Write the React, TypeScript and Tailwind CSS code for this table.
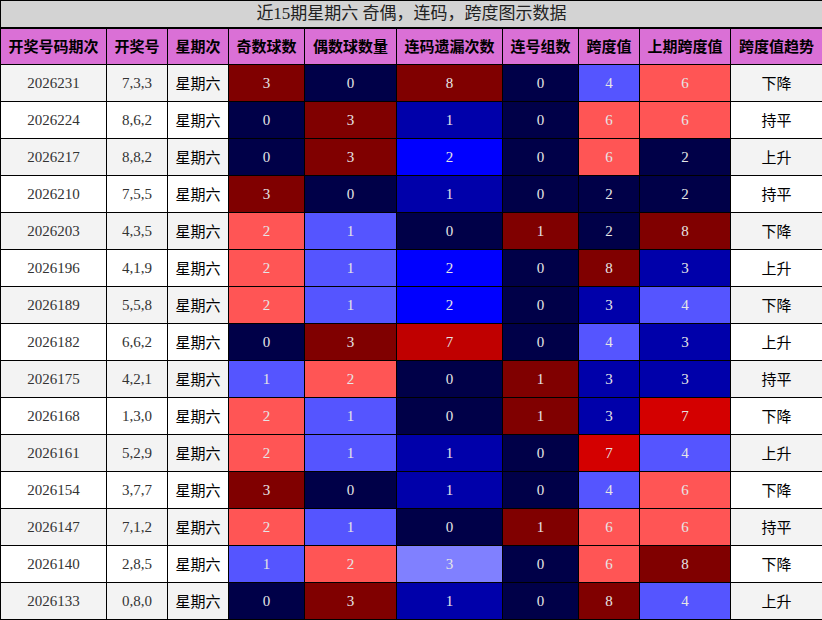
const NAVY = "bg-[#000048]";
const DKRED = "bg-[#800000]";
const LRED = "bg-[#ff5555]";
const LBLUE = "bg-[#5555ff]";
const MBLUE = "bg-[#0000aa]";
const BLUE = "bg-[#0000ff]";
const LAV = "bg-[#8080ff]";
const RED1 = "bg-[#c00000]";
const RED2 = "bg-[#d40000]";

const oddEven: Record<number, string> = { 0: NAVY, 1: LBLUE, 2: LRED, 3: DKRED };
const lianma: Record<number, string> = { 0: NAVY, 1: MBLUE, 2: BLUE, 3: LAV, 7: RED1, 8: DKRED };
const lianhao: Record<number, string> = { 0: NAVY, 1: DKRED };
const span: Record<number, string> = { 2: NAVY, 3: MBLUE, 4: LBLUE, 6: LRED, 7: RED2, 8: DKRED };

type Row = [string, string, number, number, number, number, number, number, string];

const ROWS: Row[] = [
  ["2026231", "7,3,3", 3, 0, 8, 0, 4, 6, "下降"],
  ["2026224", "8,6,2", 0, 3, 1, 0, 6, 6, "持平"],
  ["2026217", "8,8,2", 0, 3, 2, 0, 6, 2, "上升"],
  ["2026210", "7,5,5", 3, 0, 1, 0, 2, 2, "持平"],
  ["2026203", "4,3,5", 2, 1, 0, 1, 2, 8, "下降"],
  ["2026196", "4,1,9", 2, 1, 2, 0, 8, 3, "上升"],
  ["2026189", "5,5,8", 2, 1, 2, 0, 3, 4, "下降"],
  ["2026182", "6,6,2", 0, 3, 7, 0, 4, 3, "上升"],
  ["2026175", "4,2,1", 1, 2, 0, 1, 3, 3, "持平"],
  ["2026168", "1,3,0", 2, 1, 0, 1, 3, 7, "下降"],
  ["2026161", "5,2,9", 2, 1, 1, 0, 7, 4, "上升"],
  ["2026154", "3,7,7", 3, 0, 1, 0, 4, 6, "下降"],
  ["2026147", "7,1,2", 2, 1, 0, 1, 6, 6, "持平"],
  ["2026140", "2,8,5", 1, 2, 3, 0, 6, 8, "下降"],
  ["2026133", "0,8,0", 0, 3, 1, 0, 8, 4, "上升"],
];

const HEADERS = ["开奖号码期次", "开奖号", "星期次", "奇数球数", "偶数球数量", "连码遗漏次数", "连号组数", "跨度值", "上期跨度值", "跨度值趋势"];
const WIDTHS = ["w-[106px]", "w-[61px]", "w-[61px]", "w-[76px]", "w-[92px]", "w-[106px]", "w-[76px]", "w-[61px]", "w-[91px]", "w-[92px]"];

const CJK = "font-['Noto_Sans_CJK_SC',sans-serif]";
const SERIF = "font-['Liberation_Serif','Noto_Sans_CJK_SC',serif]";

function ColorCell({ value, bg }: { value: number; bg: string }) {
  return (
    <td className={`border border-black text-center text-[15px] text-[#e6e6e6] ${SERIF} ${bg}`}>{value}</td>
  );
}

export default function App() {
  return (
    <div className="w-[822px] h-[620px] overflow-hidden bg-white">
      <table className="w-[822px] table-fixed border-collapse">
        <colgroup>
          {WIDTHS.map((w, i) => (
            <col key={i} className={w} />
          ))}
        </colgroup>
        <thead>
          <tr className="h-[27px]">
            <th colSpan={10} className={`border border-black border-b-2 bg-[#d3d3d3] text-center text-[17px] font-normal text-[#222] ${SERIF}`}>
              近15期星期六 奇偶，连码，跨度图示数据
            </th>
          </tr>
          <tr className="h-[37px] bg-[#da70d6]">
            {HEADERS.map((h) => (
              <th key={h} className={`border border-black text-center text-[15px] font-bold text-black whitespace-nowrap ${CJK}`}>
                {h}
              </th>
            ))}
          </tr>
        </thead>
        <tbody>
          {ROWS.map((r, i) => {
            const rowBg = i % 2 === 0 ? "bg-[#f3f3f3]" : "bg-white";
            return (
              <tr key={r[0]} className={`h-[37px] ${rowBg}`}>
                <td className={`border border-black text-center text-[15px] text-[#333] ${SERIF}`}>{r[0]}</td>
                <td className={`border border-black text-center text-[15px] text-[#333] ${SERIF}`}>{r[1]}</td>
                <td className={`border border-black text-center text-[15px] text-black ${CJK}`}>星期六</td>
                <ColorCell value={r[2]} bg={oddEven[r[2]]} />
                <ColorCell value={r[3]} bg={oddEven[r[3]]} />
                <ColorCell value={r[4]} bg={lianma[r[4]]} />
                <ColorCell value={r[5]} bg={lianhao[r[5]]} />
                <ColorCell value={r[6]} bg={span[r[6]]} />
                <ColorCell value={r[7]} bg={span[r[7]]} />
                <td className={`border border-black text-center text-[15px] text-black ${CJK}`}>{r[8]}</td>
              </tr>
            );
          })}
        </tbody>
      </table>
    </div>
  );
}
